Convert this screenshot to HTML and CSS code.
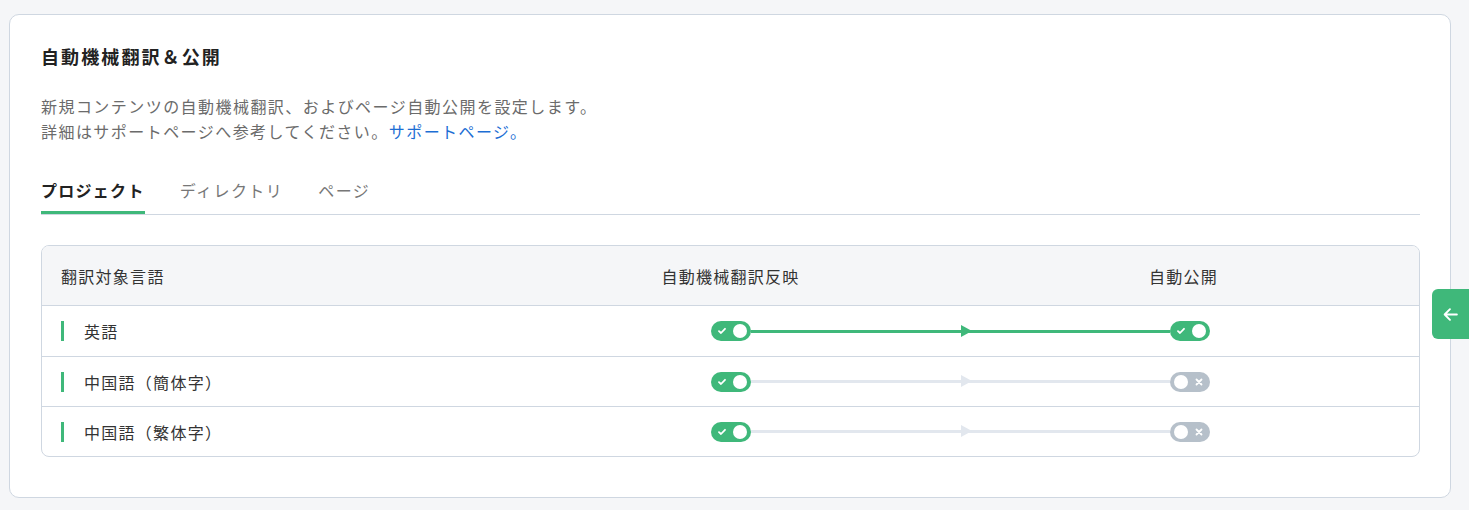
FILE: index.html
```html
<html>

<head>
    <title>自動機械翻訳＆公開</title>
    <link rel="stylesheet" href="styles.css">
</head>

<body>
    <div class="page">
        <div class="card">
            <h2 class="title">自動機械翻訳＆公開</h2>
            <p class="desc">
                新規コンテンツの自動機械翻訳、およびページ自動公開を設定します。<br>
                詳細はサポートページへ参考してください。<a href="#" class="link">サポートページ。</a>
            </p>

            <div class="tabs">
                <div class="tab active">プロジェクト</div>
                <div class="tab">ディレクトリ</div>
                <div class="tab">ページ</div>
            </div>

            <div class="table">
                <div class="row head">
                    <div class="cell lang-head">翻訳対象言語</div>
                    <div class="cell center">自動機械翻訳反映</div>
                    <div class="cell center publish">自動公開</div>
                </div>

                <div class="row first">
                    <div class="cell lang"><span class="mark"></span>英語</div>
                    <div class="flow on">
                        <span class="toggle on"><svg class="check" viewBox="0 0 8 8"><path d="M1 4.2 L3 6 L7 1.8" /></svg><span class="knob"></span></span>
                        <span class="line"><span class="arrow"></span></span>
                        <span class="toggle on"><svg class="check" viewBox="0 0 8 8"><path d="M1 4.2 L3 6 L7 1.8" /></svg><span class="knob"></span></span>
                    </div>
                </div>

                <div class="row">
                    <div class="cell lang"><span class="mark"></span>中国語（簡体字）</div>
                    <div class="flow">
                        <span class="toggle on"><svg class="check" viewBox="0 0 8 8"><path d="M1 4.2 L3 6 L7 1.8" /></svg><span class="knob"></span></span>
                        <span class="line"><span class="arrow"></span></span>
                        <span class="toggle off"><span class="knob"></span><svg class="cross" viewBox="0 0 8 8"><path d="M1.5 1.5 L6.5 6.5 M6.5 1.5 L1.5 6.5" /></svg></span>
                    </div>
                </div>

                <div class="row last">
                    <div class="cell lang"><span class="mark"></span>中国語（繁体字）</div>
                    <div class="flow">
                        <span class="toggle on"><svg class="check" viewBox="0 0 8 8"><path d="M1 4.2 L3 6 L7 1.8" /></svg><span class="knob"></span></span>
                        <span class="line"><span class="arrow"></span></span>
                        <span class="toggle off"><span class="knob"></span><svg class="cross" viewBox="0 0 8 8"><path d="M1.5 1.5 L6.5 6.5 M6.5 1.5 L1.5 6.5" /></svg></span>
                    </div>
                </div>
            </div>
        </div>
    </div>

    <div class="side-btn">
        <svg viewBox="0 0 16 16"><path d="M14 8 H2.5 M7.5 3 L2.5 8 L7.5 13" /></svg>
    </div>
</body>

</html>
```

FILE: styles.css
```css
body {
    margin: 0;
    background: #f5f6f8;
    font-family: "Noto Sans CJK JP", "Noto Sans", sans-serif;
    color: #333;
    letter-spacing: 0.08em;
}

.page {
    padding: 14px 18px 12px 9px;
}

.card {
    background: #fff;
    border: 1px solid #cfd7e1;
    border-radius: 10px;
    padding: 28px 30px 40px 31px;
}

.title {
    margin: 0;
    font-size: 18px;
    line-height: 26px;
    font-weight: bold;
    color: #222;
    letter-spacing: 2.1px;
}

.desc {
    margin: 25px 0 0 0;
    font-size: 16px;
    line-height: 25px;
    color: #6b6b6b;
    letter-spacing: 1.45px;
}

.link {
    color: #1c6ed4;
    text-decoration: none;
}

/* tabs */
.tabs {
    display: flex;
    gap: 35px;
    margin-top: 34px;
    border-bottom: 1px solid #cfd7e1;
}

.tab {
    font-size: 16px;
    line-height: 24px;
    padding-bottom: 9px;
    border-bottom: 3px solid transparent;
    color: #777;
    letter-spacing: 1.45px;
}

.tab.active {
    font-weight: bold;
    color: #222;
    letter-spacing: 1.28px;
    border-bottom-color: #3fb87a;
}

/* table */
.table {
    margin-top: 30px;
    border: 1px solid #cfd7e1;
    border-radius: 8px;
    overflow: hidden;
}

.row {
    display: grid;
    grid-template-columns: 1fr 1fr 1fr;
    height: 49px;
    border-bottom: 1px solid #cfd7e1;
    align-items: center;
}

.row.first {
    height: 50px;
}

.row.last {
    border-bottom: none;
}

.row.head {
    height: 59px;
    background: #f5f6f8;
    font-size: 16px;
}

.cell {
    font-size: 16px;
    color: #333;
}

.center {
    text-align: center;
}

.publish {
    padding-right: 12px;
}

.lang-head {
    padding-left: 19px;
}

.lang {
    display: flex;
    align-items: center;
    padding-left: 19px;
}

.mark {
    width: 3px;
    height: 20px;
    background: #3fb87a;
    margin-right: 20px;
}

.flow {
    grid-column: 2 / 4;
    display: flex;
    align-items: center;
    padding: 0 209px 0 210px;
}

.line {
    flex: 1;
    height: 3px;
    background: #e2e7ee;
    position: relative;
}

.flow.on .line {
    background: #3fb87a;
}

.arrow {
    position: absolute;
    left: 50%;
    top: -5px;
    width: 0;
    height: 0;
    border-top: 6.5px solid transparent;
    border-bottom: 6.5px solid transparent;
    border-left: 11px solid #e2e7ee;
}

.flow.on .arrow {
    border-left-color: #3fb87a;
}

.toggle {
    width: 40px;
    height: 20px;
    border-radius: 10px;
    display: flex;
    align-items: center;
    justify-content: space-between;
    padding: 0 4px 0 7px;
    box-sizing: border-box;
}

.toggle.on {
    background: #3fb87a;
}

.toggle.off {
    background: #b6c0ca;
    padding: 0 7px 0 4px;
}

.knob {
    width: 14px;
    height: 14px;
    border-radius: 50%;
    background: #fff;
}

.check,
.cross {
    width: 8px;
    height: 8px;
    fill: none;
    stroke: #fff;
    stroke-width: 1.8;
    stroke-linecap: round;
    stroke-linejoin: round;
}

/* side button */
.side-btn {
    position: absolute;
    right: 0;
    top: 289px;
    width: 37px;
    height: 50px;
    background: #3fb87a;
    border-radius: 6px 0 0 6px;
    display: flex;
    align-items: center;
    justify-content: center;
}

.side-btn svg {
    width: 17px;
    height: 17px;
    fill: none;
    stroke: #fff;
    stroke-width: 1.8;
    stroke-linecap: round;
    stroke-linejoin: round;
}
```
